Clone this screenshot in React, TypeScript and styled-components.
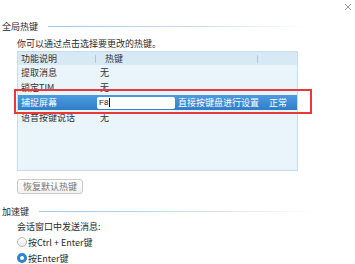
import React from 'react';
import styled, { createGlobalStyle } from 'styled-components';

const GlobalStyle = createGlobalStyle`
  html, body {
    margin: 0;
    padding: 0;
    background: #ffffff;
  }
  body {
    font-family: "Noto Sans CJK SC", "Noto Sans", sans-serif;
  }
`;

const Page = styled('div')`
  position: relative;
  width: 355px;
  height: 264px;
  overflow: hidden;
  box-sizing: border-box;
  padding-top: 20px;
  font-size: 9px;
  color: #2b2b2b;
`;

const Close = styled('div')`
  position: absolute;
  top: 1px;
  right: 3px;
  width: 8px;
  height: 8px;
`;

const SectionTitle = styled('div')<{ $top?: number }>`
  display: flex;
  align-items: center;
  height: 13px;
  padding-left: 2px;
  margin-top: ${(p) => p.$top || 0}px;
  line-height: 13px;
`;

const Rule = styled('div')<{ $width: number }>`
  width: ${(p) => p.$width}px;
  height: 1px;
  margin-left: 10px;
  background: linear-gradient(to right, #a6c6e4 0%, #c9ddf0 55%, rgba(255, 255, 255, 0) 100%);
`;

const Body = styled('div')`
  padding-left: 17px;
`;

const Line = styled('div')<{ $top?: number }>`
  height: 12px;
  line-height: 12px;
  margin-top: ${(p) => p.$top || 0}px;
  white-space: nowrap;
`;

const Table = styled('div')`
  width: 281px;
  height: 120px;
  margin-top: 1px;
  box-sizing: border-box;
  border: 1px solid #c8ddf0;
  background: #eaf4fb;
`;

const HeaderRow = styled('div')`
  display: flex;
  align-items: center;
  height: 13px;
  background: #d8e9f6;
  color: #333;
`;

const HeadCell = styled('div')<{ $width: number; $pad: number; $divider?: boolean }>`
  position: relative;
  width: ${(p) => p.$width}px;
  padding-left: ${(p) => p.$pad}px;
  box-sizing: border-box;
  white-space: nowrap;
  &::after {
    content: '';
    display: ${(p) => (p.$divider ? 'block' : 'none')};
    position: absolute;
    right: 0;
    top: 3px;
    width: 1px;
    height: 8px;
    background: #a9c8e4;
  }
`;

const Row = styled('div')<{ $selected?: boolean }>`
  display: flex;
  align-items: center;
  height: 15px;
  color: ${(p) => (p.$selected ? '#ffffff' : '#333333')};
  background: ${(p) =>
    p.$selected ? 'linear-gradient(to bottom, #4d9ade, #2f7fc8)' : 'transparent'};
`;

const Cell = styled('div')<{ $width?: number; $pad: number }>`
  width: ${(p) => (p.$width ? `${p.$width}px` : 'auto')};
  padding-left: ${(p) => p.$pad}px;
  box-sizing: border-box;
  white-space: nowrap;
`;

const KeyInput = styled('div')`
  display: flex;
  align-items: center;
  width: 78px;
  height: 12px;
  margin-left: 1px;
  padding-left: 2px;
  box-sizing: border-box;
  border-radius: 2px;
  background: #ffffff;
  color: #222;
  font-family: "Liberation Sans", sans-serif;
  font-size: 8px;
`;

const Caret = styled('span')`
  display: inline-block;
  width: 1px;
  height: 9px;
  margin-left: 1px;
  background: #000;
`;

const Highlight = styled('div')`
  position: absolute;
  left: 14px;
  top: 89px;
  width: 298px;
  height: 25px;
  box-sizing: border-box;
  border: 2px solid #e8383b;
  pointer-events: none;
`;

const ResetButton = styled('button')`
  display: block;
  width: 66px;
  height: 15px;
  margin-top: 8px;
  padding: 0;
  box-sizing: border-box;
  border: 1px solid #c9c9c9;
  border-radius: 3px;
  background: linear-gradient(to bottom, #ffffff, #f2f2f2);
  color: #777;
  font-family: inherit;
  font-size: 9px;
  line-height: 13px;
`;

const RadioRow = styled('label')<{ $top: number }>`
  display: flex;
  align-items: center;
  height: 12px;
  margin-top: ${(p) => p.$top}px;
  white-space: nowrap;
`;

const Dot = styled('span')<{ $checked?: boolean }>`
  display: inline-block;
  width: 10px;
  height: 10px;
  margin-right: 1px;
  box-sizing: border-box;
  border-radius: 50%;
  border: ${(p) => (p.$checked ? '3px solid #2f82d6' : '1px solid #b9b9b9')};
  background: ${(p) => (p.$checked ? '#ffffff' : 'linear-gradient(to bottom, #ffffff, #ececec)')};
`;

const rows = [
  { name: '提取消息', key: '无' },
  { name: '锁定TIM', key: '无' },
];

const App: React.FC = () => {
  return (
    <Page>
      <GlobalStyle />
      <Close>
        <svg width="8" height="8" viewBox="0 0 8 8">
          <path d="M1 1 L7 7 M7 1 L1 7" stroke="#9a9a9a" strokeWidth="1" />
        </svg>
      </Close>

      <SectionTitle>
        全局热键
        <Rule $width={260} />
      </SectionTitle>
      <Body>
        <Line $top={5}>你可以通过点击选择要更改的热键。</Line>
        <Table>
          <HeaderRow>
            <HeadCell $width={78} $pad={3} $divider>
              功能说明
            </HeadCell>
            <HeadCell $width={162} $pad={9} $divider>
              热键
            </HeadCell>
          </HeaderRow>
          {rows.map((r) => (
            <Row key={r.name}>
              <Cell $width={78} $pad={3}>
                {r.name}
              </Cell>
              <Cell $pad={4}>{r.key}</Cell>
            </Row>
          ))}
          <Row $selected>
            <Cell $width={78} $pad={3}>
              捕捉屏幕
            </Cell>
            <KeyInput>
              F8
              <Caret />
            </KeyInput>
            <Cell $width={94} $pad={3}>
              直接按键盘进行设置
            </Cell>
            <Cell $pad={0}>正常</Cell>
          </Row>
          <Row>
            <Cell $width={78} $pad={3}>
              语音按键说话
            </Cell>
            <Cell $pad={4}>无</Cell>
          </Row>
        </Table>
        <ResetButton>恢复默认热键</ResetButton>
      </Body>
      <Highlight />

      <SectionTitle $top={11}>
        加速键
        <Rule $width={278} />
      </SectionTitle>
      <Body>
        <Line $top={3}>会话窗口中发送消息:</Line>
        <RadioRow $top={3}>
          <Dot />
          按Ctrl + Enter键
        </RadioRow>
        <RadioRow $top={4}>
          <Dot $checked />
          按Enter键
        </RadioRow>
      </Body>
    </Page>
  );
};

export default App;
